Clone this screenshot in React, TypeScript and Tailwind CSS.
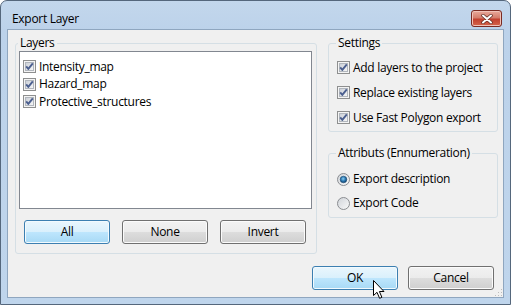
import type { ReactNode } from "react";

const layers = ["Intensity_map", "Hazard_map", "Protective_structures"];
const settings = ["Add layers to the project", "Replace existing layers", "Use Fast Polygon export"];

// Win7-style 13x13 checkbox, always ticked in this dialog
function CheckBox() {
  return (
    <svg width="13" height="13" viewBox="0 0 13 13" className="shrink-0">
      <defs>
        <linearGradient id="cbFill" x1="0" y1="0" x2="1" y2="1">
          <stop offset="0" stopColor="#c9ced6" />
          <stop offset="1" stopColor="#f8f8f8" />
        </linearGradient>
      </defs>
      <rect x="0.5" y="0.5" width="12" height="12" fill="#f4f4f4" stroke="#8e8f8f" />
      <rect x="2.5" y="2.5" width="8" height="8" fill="url(#cbFill)" stroke="#b1b6bd" />
      <path d="M3.2 6.4 L5.3 8.9 L9.8 3.4" fill="none" stroke="#4b5f8f" strokeWidth="1.9" strokeLinejoin="round" />
    </svg>
  );
}

function Radio({ checked }: { checked?: boolean }) {
  return (
    <svg width="13" height="13" viewBox="0 0 13 13" className="shrink-0">
      <defs>
        <linearGradient id="rdFill" x1="0" y1="0" x2="1" y2="1">
          <stop offset="0" stopColor="#cfd3d8" />
          <stop offset="1" stopColor="#fafafa" />
        </linearGradient>
        <radialGradient id="rdDot" cx="0.45" cy="0.4" r="0.6">
          <stop offset="0" stopColor="#8fd0f3" />
          <stop offset="0.55" stopColor="#2b79b3" />
          <stop offset="1" stopColor="#0d3f6b" />
        </radialGradient>
      </defs>
      <circle cx="6.5" cy="6.5" r="6" fill="url(#rdFill)" stroke="#8a8d91" />
      {checked && <circle cx="6.5" cy="6.5" r="3.3" fill="url(#rdDot)" stroke="#1d4c74" strokeWidth="0.6" />}
    </svg>
  );
}

function Button({ children, primary }: { children: ReactNode; primary?: boolean }) {
  return (
    <button
      type="button"
      className={
        primary
          ? "flex h-[24px] w-[86px] items-center justify-center rounded-[3px] border border-[#3c7fb1] bg-[linear-gradient(#eaf6fd_0%,#d9f0fc_50%,#bee6fd_50%,#a7d9f5_100%)] shadow-[inset_0_0_0_1px_#f2fafe]"
          : "flex h-[24px] w-[86px] items-center justify-center rounded-[3px] border border-[#707070] bg-[linear-gradient(#f2f2f2_0%,#ebebeb_50%,#dddddd_50%,#cfcfcf_100%)] shadow-[inset_0_0_0_1px_#fbfbfb]"
      }
    >
      {children}
    </button>
  );
}

function Group({ title, className, children }: { title: string; className: string; children: ReactNode }) {
  return (
    <fieldset className={"rounded-[3px] border border-[#d5dfe5] " + className}>
      <legend className="ml-[-1px] px-[2px] leading-[16px]">{title}</legend>
      {children}
    </fieldset>
  );
}

export default function App() {
  return (
    <div className="relative h-[305px] w-[511px] overflow-hidden bg-white font-['Open_Sans',sans-serif] text-[12px] tracking-[-0.3px] text-black">
      <div className="flex h-full flex-col rounded-t-[7px] border border-[#55677c] bg-[linear-gradient(#c3d7ec_0px,#bcd2ea_30px,#bfd5ec_100%)] px-[6px] pb-[6px]">
        {/* title bar */}
        <div className="flex h-[28px] shrink-0 items-start justify-between">
          <div className="pl-[5px] pt-[10px] leading-[16px]">Export Layer</div>
          <div className="mr-[2px] mt-[9px] flex h-[17px] w-[31px] items-center justify-center rounded-[3px] border border-[#7a2a22] bg-[linear-gradient(#e9a99b_0%,#d47d6c_45%,#c2412f_55%,#d5644b_100%)] shadow-[inset_0_0_0_1px_#f0c2b8]">
            <svg width="12" height="10" viewBox="0 0 12 10">
              <path d="M2 1.5 L10 8.5 M10 1.5 L2 8.5" stroke="#5b2a22" strokeWidth="3.4" strokeLinecap="round" />
              <path d="M2 1.5 L10 8.5 M10 1.5 L2 8.5" stroke="#ffffff" strokeWidth="2" strokeLinecap="round" />
            </svg>
          </div>
        </div>

        {/* client area */}
        <div className="relative flex flex-1 flex-col border border-[#8fa6bf] bg-[#f0f0f0] pt-[5px]">
          <div className="flex items-start pl-[7px]">
            <Group title="Layers" className="h-[219px] w-[302px] pl-[3px] pr-[4px]">
              <div className="h-[158px] border border-[#828790] bg-white pl-[3px] pt-[6px]">
                {layers.map((name) => (
                  <div key={name} className="flex h-[17.5px] items-center gap-[3px]">
                    <CheckBox />
                    <span className="leading-[16px]">{name}</span>
                  </div>
                ))}
              </div>
              <div className="mt-[11px] flex gap-[12px] pl-[5px]">
                <Button primary>All</Button>
                <Button>None</Button>
                <Button>Invert</Button>
              </div>
            </Group>

            <div className="ml-[11px] flex w-[170px] flex-col">
              <Group title="Settings" className="h-[97px] pl-[8px]">
                <div className="pt-[4px]">
                  {settings.map((s) => (
                    <div key={s} className="flex h-[25px] items-center gap-[3px]">
                      <CheckBox />
                      <span className="leading-[16px]">{s}</span>
                    </div>
                  ))}
                </div>
              </Group>
              <Group title="Attributs (Ennumeration)" className="mt-[13px] h-[73px] pl-[8px]">
                <div className="pt-[6px]">
                  <div className="flex h-[24px] items-center gap-[3px]">
                    <Radio checked />
                    <span className="leading-[16px]">Export description</span>
                  </div>
                  <div className="flex h-[24px] items-center gap-[3px]">
                    <Radio />
                    <span className="leading-[16px]">Export Code</span>
                  </div>
                </div>
              </Group>
            </div>
          </div>

          <div className="mt-[12px] flex justify-end gap-[10px] pr-[9px]">
            <Button primary>OK</Button>
            <Button>Cancel</Button>
          </div>

          {/* size grip */}
          <svg width="8" height="8" viewBox="0 0 8 8" className="absolute bottom-[0px] right-[0px]">
            <rect x="6" y="0" width="1" height="1" fill="#bcbcbc" />
            <rect x="3" y="3" width="1" height="1" fill="#bcbcbc" />
            <rect x="6" y="3" width="1" height="1" fill="#bcbcbc" />
            <rect x="0" y="6" width="1" height="1" fill="#bcbcbc" />
            <rect x="3" y="6" width="1" height="1" fill="#bcbcbc" />
            <rect x="6" y="6" width="1" height="1" fill="#bcbcbc" />
          </svg>
        </div>
      </div>

      {/* mouse pointer over the OK button */}
      <svg width="13" height="20" viewBox="0 0 13 20" className="absolute left-[373px] top-[280px]">
        <path
          d="M0.5 0.5 L0.5 15.5 L4 12.3 L6.6 18.3 L8.9 17.3 L6.4 11.5 L11 11.5 Z"
          fill="#ffffff"
          stroke="#000000"
          strokeLinejoin="round"
        />
      </svg>
    </div>
  );
}
